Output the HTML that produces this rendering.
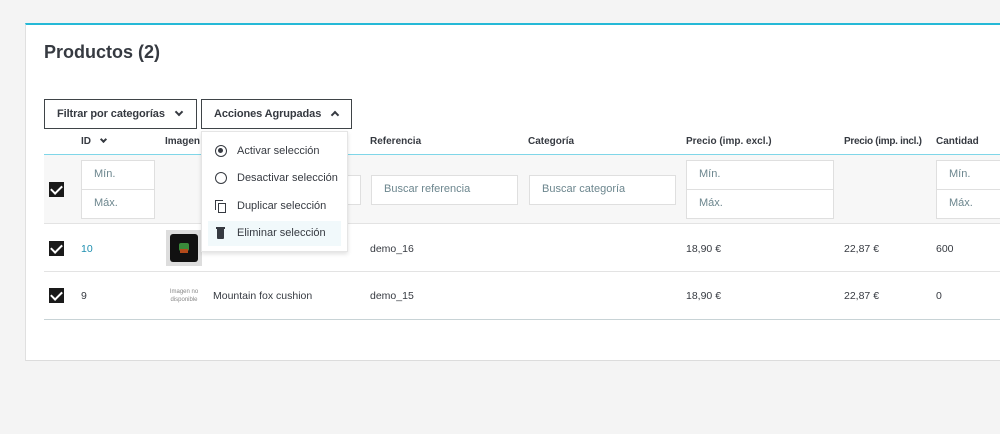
<!DOCTYPE html><html><head><style>
*{box-sizing:border-box;margin:0;padding:0}
body{width:1000px;height:434px;background:#f4f4f4;font-family:"Liberation Sans",sans-serif;position:relative;overflow:hidden;color:#363a41}
.a{position:absolute}
.card{left:25px;top:23px;width:990px;height:338px;background:#fff;border-top:2px solid #25b9d7;border-left:1px solid #e0e0e0;border-bottom:1px solid #dcdcdc}
h1{position:absolute;left:44px;top:42px;font-size:18px;font-weight:bold;color:#363a41}
.btn{height:30px;border:1px solid #3f4448;background:#fff;font-size:11px;font-weight:bold;color:#363a41;padding:8px 12px;top:99px;letter-spacing:-0.1px}
.th{top:136px;font-size:10px;font-weight:bold;color:#363a41}
.in{background:#fff;border:1px solid #dfdfdf;font-size:11px;color:#6c868e;padding:7px 12px;height:30px}
.cb{width:15px;height:15px;background:#1a1a1a;left:49px}
.cb:after{content:"";position:absolute;left:4px;top:1px;width:5px;height:9px;border:solid #fff;border-width:0 2px 2px 0;transform:rotate(45deg)}
.td{font-size:10.5px;color:#363a41}
.m{font-size:11px;color:#363a41;left:237px}
</style></head><body>
<div class="a card"></div>
<h1>Productos (2)</h1>
<div class="a btn" style="left:44px;width:153px">Filtrar por categorías<span style="position:absolute;right:14px;top:9px;width:6px;height:6px;border:solid #363a41;border-width:0 2px 2px 0;transform:rotate(45deg)"></span></div>
<div class="a btn" style="left:201px;width:151px">Acciones Agrupadas<span style="position:absolute;right:13px;top:12px;width:6px;height:6px;border:solid #363a41;border-width:2px 0 0 2px;transform:rotate(45deg)"></span></div>
<div class="a th" style="left:81px">ID</div>
<div class="a" style="left:101px;top:137px;width:5px;height:5px;border:solid #363a41;border-width:0 2px 2px 0;transform:rotate(45deg)"></div>
<div class="a th" style="left:165px">Imagen</div>
<div class="a th" style="left:370px">Referencia</div>
<div class="a th" style="left:528px">Categoría</div>
<div class="a th" style="left:686px">Precio (imp. excl.)</div>
<div class="a th" style="left:844px;letter-spacing:-0.3px">Precio (imp. incl.)</div>
<div class="a th" style="left:936px">Cantidad</div>
<div class="a" style="left:44px;top:154px;width:960px;height:1px;background:#7fd6e8"></div>
<div class="a" style="left:44px;top:155px;width:960px;height:69px;background:#f7f7f7;border-bottom:1px solid #e3e3e3"></div>
<div class="a cb" style="top:182px"></div>
<div class="a in" style="left:81px;top:160px;width:74px">Mín.</div>
<div class="a in" style="left:81px;top:189px;width:74px">Máx.</div>
<div class="a in" style="left:330px;top:175px;width:31px"></div>
<div class="a in" style="left:371px;top:175px;width:147px">Buscar referencia</div>
<div class="a in" style="left:529px;top:175px;width:147px">Buscar categoría</div>
<div class="a in" style="left:686px;top:160px;width:148px">Mín.</div>
<div class="a in" style="left:686px;top:189px;width:148px">Máx.</div>
<div class="a in" style="left:936px;top:160px;width:70px">Mín.</div>
<div class="a in" style="left:936px;top:189px;width:70px">Máx.</div>
<div class="a" style="left:44px;top:271px;width:960px;height:1px;background:#e3e3e3"></div>
<div class="a" style="left:44px;top:319px;width:960px;height:1px;background:#c8d3d6"></div>
<div class="a cb" style="top:241px"></div>
<div class="a td" style="left:81px;top:243px;color:#1d8fb0">10</div>
<div class="a" style="left:166px;top:230px;width:36px;height:36px;background:#ddd"><div style="margin:4px;width:28px;height:28px;background:#111;border-radius:3px;position:relative"><div style="position:absolute;left:9px;top:9px;width:10px;height:8px;background:#3a8a3a;border-radius:2px"></div><div style="position:absolute;left:10px;top:15px;width:8px;height:4px;background:#b34a1a"></div></div></div>
<div class="a td" style="left:370px;top:243px">demo_16</div>
<div class="a td" style="left:686px;top:243px">18,90 €</div>
<div class="a td" style="left:844px;top:243px">22,87 €</div>
<div class="a td" style="left:936px;top:243px">600</div>
<div class="a cb" style="top:288px"></div>
<div class="a td" style="left:81px;top:290px">9</div>
<div class="a" style="left:167px;top:288px;font-size:6px;color:#888;text-align:center;width:34px;line-height:8px">Imagen no disponible</div>
<div class="a td" style="left:213px;top:290px">Mountain fox cushion</div>
<div class="a td" style="left:370px;top:290px">demo_15</div>
<div class="a td" style="left:686px;top:290px">18,90 €</div>
<div class="a td" style="left:844px;top:290px">22,87 €</div>
<div class="a td" style="left:936px;top:290px">0</div>
<div class="a" style="left:201px;top:131px;width:147px;height:121px;background:#fff;border:1px solid #e5e5e5;box-shadow:0 2px 4px rgba(0,0,0,.12)"></div>
<div class="a" style="left:208px;top:221px;width:133px;height:25px;background:#f1f9fb"></div>
<div class="a" style="left:215px;top:145px;width:12px;height:12px;border:1.5px solid #363a41;border-radius:50%"><div style="margin:2px;width:5px;height:5px;background:#363a41;border-radius:50%"></div></div>
<div class="a" style="left:215px;top:172px;width:12px;height:12px;border:1.5px solid #363a41;border-radius:50%"></div>
<div class="a" style="left:215px;top:200px;width:8px;height:10px;border-left:1.5px solid #363a41;border-top:1.5px solid #363a41"></div>
<div class="a" style="left:218px;top:203px;width:8px;height:10px;border:1.5px solid #363a41"></div>
<div class="a" style="left:216px;top:227px;width:9px;height:2px;background:#363a41"></div>
<div class="a" style="left:217px;top:229px;width:7px;height:10px;background:#363a41;border-radius:0 0 1px 1px"></div>
<div class="a m" style="top:145px">Activar selección</div>
<div class="a m" style="top:172px">Desactivar selección</div>
<div class="a m" style="top:200px">Duplicar selección</div>
<div class="a m" style="top:227px">Eliminar selección</div>
</body></html>
